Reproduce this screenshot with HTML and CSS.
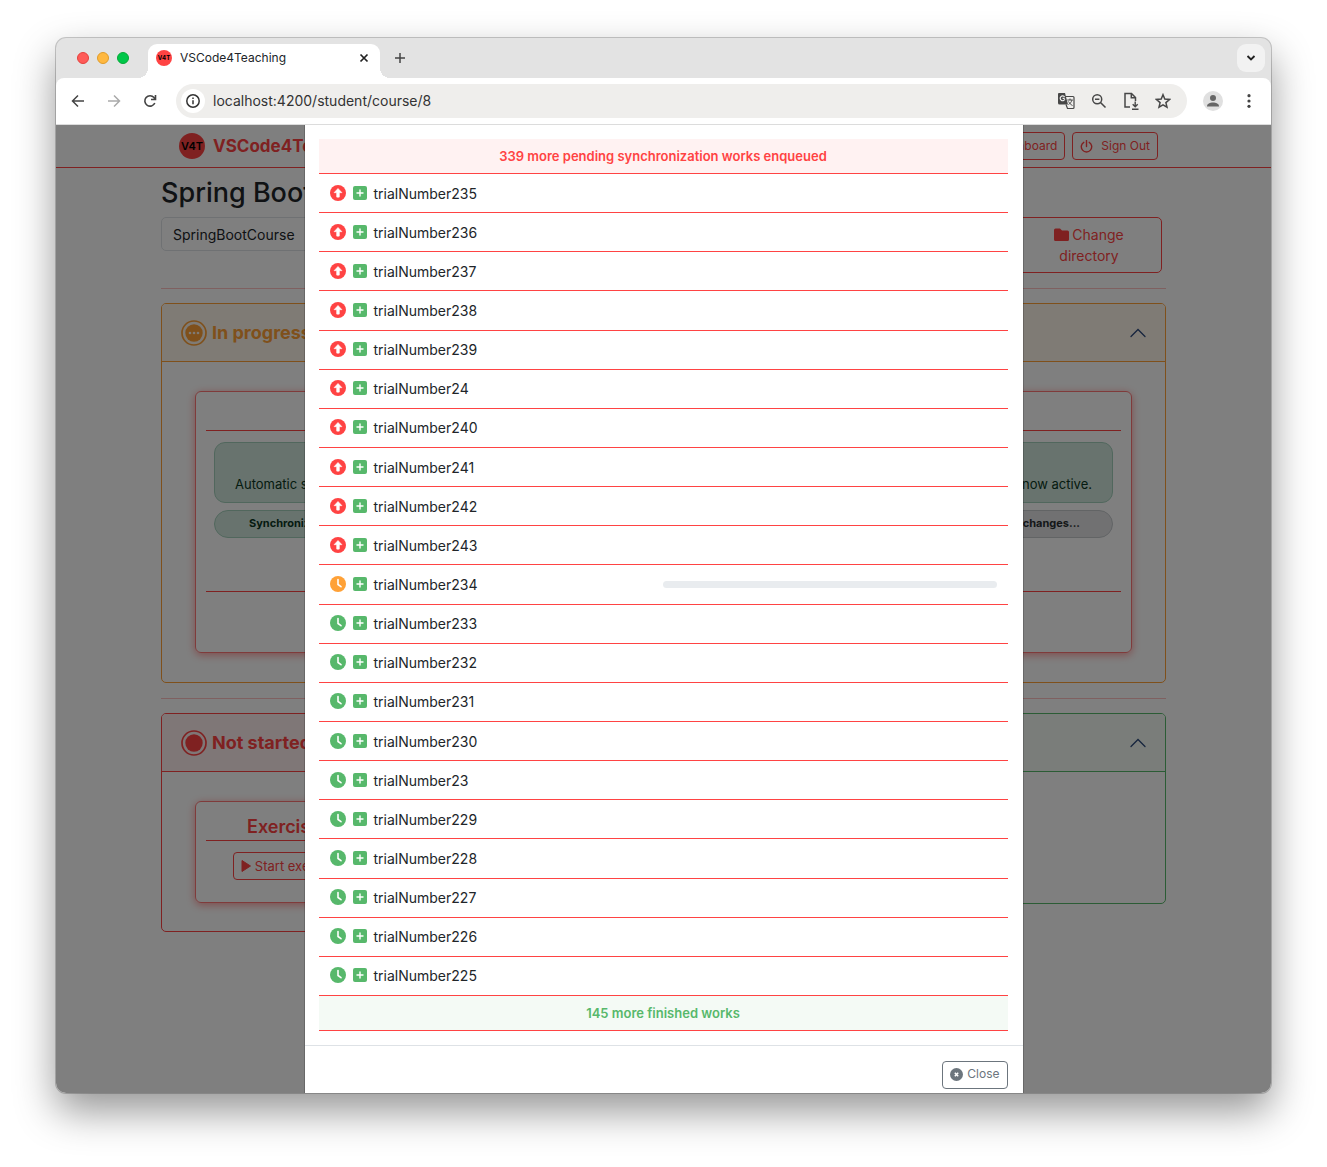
FILE: index.html
```html
<!DOCTYPE html>
<html lang="en">
<head>
<meta charset="utf-8">
<meta name="viewport" content="width=device-width, initial-scale=1">
<title>VSCode4Teaching</title>
<link rel="stylesheet" href="styles.css">
</head>
<body>
<svg class="sprite" aria-hidden="true">
  <symbol id="up" viewBox="0 0 16 16"><circle cx="8" cy="8" r="8" fill="currentColor"/><path d="M8 3.400l4 4.300H9.400v4a.5.5 0 0 1-.5.5H7.100a.5.5 0 0 1-.5-.5v-4H4z" fill="#fff" stroke="#fff" stroke-width=".5" stroke-linejoin="round"/></symbol>
  <symbol id="clock" viewBox="0 0 16 16"><circle cx="8" cy="8" r="8" fill="currentColor"/><path d="M8 3.500v5l3 2.200" fill="none" stroke="#fff" stroke-width="1.600" stroke-linecap="round"/></symbol>
  <symbol id="plus" viewBox="0 0 14 14"><rect width="14" height="14" rx="2" fill="currentColor"/><path d="M7 4v6M4 7h6" stroke="#fff" stroke-width="1.400" stroke-linecap="round"/></symbol>
  <symbol id="chevron" viewBox="0 0 16 16"><path d="M1 11.500l7-7 7 7" fill="none" stroke="currentColor" stroke-width="1.300" stroke-linecap="round"/></symbol>
</svg>
<div class="window">
  <div class="tabs">
    <div class="lights"><i class="light light-red"></i><i class="light light-amber"></i><i class="light light-green"></i></div>
    <div class="tab">
      <span class="badge badge-small">V4T</span>
      <span class="tab-title">VSCode4Teaching</span>
      <button class="icon-button" aria-label="Close tab"><svg width="10" height="10" viewBox="0 0 10 10"><path d="M1.500 1.500l7 7M8.500 1.500l-7 7" stroke="#222" stroke-width="1.700"/></svg></button>
    </div>
    <button class="icon-button new-tab" aria-label="New tab"><svg width="12" height="12" viewBox="0 0 12 12"><path d="M6 1v10M1 6h10" stroke="#444" stroke-width="1.500"/></svg></button>
    <button class="icon-button tab-search" aria-label="Search tabs"><svg width="10" height="8" viewBox="0 0 10 8"><path d="M1.500 2L5 5.500 8.500 2" fill="none" stroke="#222" stroke-width="1.900"/></svg></button>
  </div>
  <div class="toolbar">
    <button class="icon-button" aria-label="Back"><svg width="14" height="14" viewBox="0 0 14 14"><path d="M13 7H2M7 1.500L1.500 7 7 12.500" fill="none" stroke="#444" stroke-width="1.500"/></svg></button>
    <button class="icon-button" aria-label="Forward"><svg width="14" height="14" viewBox="0 0 14 14"><path d="M1 7h11M7 1.500L12.500 7 7 12.500" fill="none" stroke="#aaa" stroke-width="1.500"/></svg></button>
    <button class="icon-button" aria-label="Reload"><svg width="14" height="14" viewBox="0 0 14 14"><path d="M11.800 9A5.200 5.200 0 1 1 11 3.600L12.300 5M12.500 1v4.500H8" fill="none" stroke="#444" stroke-width="1.600"/></svg></button>
    <div class="address">
      <span class="site-info"><svg width="14" height="14" viewBox="0 0 14 14"><circle cx="7" cy="7" r="6.200" fill="none" stroke="#333" stroke-width="1.500"/><path d="M7 6.200v4M7 3.400v1.600" stroke="#333" stroke-width="1.500"/></svg></span>
      <input class="url" aria-label="Address" value="localhost:4200/student/course/8">
      <button class="icon-button" aria-label="Translate"><svg width="18" height="18" viewBox="0 0 18 18"><path d="M2 1h6l3 11.500H2.500a1.500 1.500 0 0 1-1.500-1.500V2a1 1 0 0 1 1-1z" fill="#474747"/><path d="M8.500 4.500h7.500a1 1 0 0 1 1 1V15.500a1 1 0 0 1-1 1h-5.500l-1.500-4" fill="none" stroke="#474747" stroke-width="1.200"/><path d="M7.700 6.400H5.600M7.600 5A2.400 2.400 0 1 0 7.800 7.300" fill="none" stroke="#eee" stroke-width="1.200"/><path d="M10.300 8h5.500M13 6.500V8M15 8c-.5 2-2 3.500-3.500 4.500M11.500 9.500c1 1.500 2 3 4 4" fill="none" stroke="#474747"/></svg></button>
      <button class="icon-button" aria-label="Zoom"><svg width="16" height="16" viewBox="0 0 16 16"><circle cx="6.200" cy="6.200" r="4.500" fill="none" stroke="#474747" stroke-width="1.500"/><path d="M9.500 9.500l5 5M4 6.200h4.400" stroke="#474747" stroke-width="1.500"/></svg></button>
      <button class="icon-button" aria-label="Install"><svg width="16" height="18" viewBox="0 0 16 18"><path d="M7 15H2V1.500h6.500L12.500 5.500V9M8.300 1.500v4.300h4.200" fill="none" stroke="#474747" stroke-width="1.500"/><path d="M12.200 9.500v5M9.700 12.300l2.500 2.500 2.500-2.500M9 17.200h6.500" fill="none" stroke="#474747" stroke-width="1.400"/></svg></button>
      <button class="icon-button" aria-label="Bookmark"><svg width="16" height="16" viewBox="0 0 16 16"><path d="M8 1.700l1.800 4.400 4.700.4-3.600 3.100 1.100 4.600L8 11.800l-4 2.400 1.100-4.600L1.500 6.500l4.700-.4z" fill="none" stroke="#474747" stroke-width="1.500"/></svg></button>
    </div>
    <button class="icon-button profile" aria-label="Profile"><svg width="20" height="20" viewBox="0 0 20 20"><circle cx="10" cy="10" r="10" fill="#e0e0e0"/><circle cx="10" cy="7" r="3" fill="#666"/><path d="M4 15.500c0-3 3-4 6-4s6 1 6 4z" fill="#666"/></svg></button>
    <button class="icon-button" aria-label="Menu"><svg width="4" height="14" viewBox="0 0 4 14"><g fill="#444"><circle cx="2" cy="1.700" r="1.600"/><circle cx="2" cy="7" r="1.600"/><circle cx="2" cy="12.300" r="1.600"/></g></svg></button>
  </div>

  <div class="viewport">
    <div class="page">
      <nav class="nav">
        <a class="brand" href="#"><span class="badge">V4T</span>VSCode4Teaching</a>
        <div class="nav-actions">
          <button class="button button-red">Dashboard</button>
          <button class="button button-red sign-out"><svg width="13" height="13" viewBox="0 0 13 13"><path d="M3.800 2.300a5.200 5.200 0 1 0 5.400 0M6.500.5v6" fill="none" stroke="currentColor" stroke-width="1.400" stroke-linecap="round"/></svg>Sign Out</button>
        </div>
      </nav>
      <main class="container">
        <h1 class="title">Spring Boot</h1>
        <div class="directory">
          <input class="directory-path" aria-label="Course directory" value="SpringBootCourse" readonly>
          <button class="button-directory"><svg class="folder" width="16" height="14" viewBox="0 0 16 14"><path d="M2 .5h4l2 2h5.500A1.500 1.500 0 0 1 15 4v7.500a1.500 1.500 0 0 1-1.500 1.500h-12A1.500 1.500 0 0 1 0 11.500v-9.500A1.500 1.500 0 0 1 1.500.5z" fill="currentColor"/></svg>Change directory</button>
        </div>
        <hr class="rule">
        <section class="panel panel-amber">
          <h2 class="panel-header"><svg width="26" height="26" viewBox="0 0 26 26"><circle cx="13" cy="13" r="12" fill="none" stroke="currentColor" stroke-width="1.700"/><circle cx="13" cy="13" r="8.700" fill="currentColor"/><g fill="#fff5e8"><circle cx="9" cy="13" r="1.300"/><circle cx="13" cy="13" r="1.300"/><circle cx="17" cy="13" r="1.300"/></g></svg><span>In progress</span><svg class="chevron"><use href="#chevron"/></svg></h2>
          <div class="panel-body">
            <article class="card card-wide">
              <div class="card-title"></div>
              <div class="notices">
                <p class="alert"><span>Automatic synchronization</span><span>is now active.</span></p>
                <div class="pills"><span class="pill pill-green">Synchronized</span><span class="pill pill-gray">Waiting for changes...</span></div>
              </div>
              <div class="card-foot"></div>
            </article>
          </div>
        </section>
        <hr class="rule">
        <div class="columns">
          <section class="panel panel-red">
            <h2 class="panel-header"><svg width="26" height="26" viewBox="0 0 26 26"><circle cx="13" cy="13" r="12" fill="none" stroke="currentColor" stroke-width="1.700"/><circle cx="13" cy="13" r="8.700" fill="currentColor"/></svg><span>Not started</span></h2>
            <div class="panel-body">
              <article class="card card-small">
                <h3 class="card-title">Exercise 1</h3>
                <button class="button button-red start"><svg width="10" height="12" viewBox="0 0 10 12"><path d="M1 .5L9.500 6 1 11.500z" fill="currentColor" stroke="currentColor" stroke-linejoin="round"/></svg>Start exercise</button>
              </article>
            </div>
          </section>
          <section class="panel panel-green">
            <h2 class="panel-header"><span></span><svg class="chevron"><use href="#chevron"/></svg></h2>
            <div class="panel-body panel-empty"></div>
          </section>
        </div>
      </main>
    </div>

    <div class="backdrop">
      <div class="modal" role="dialog" aria-label="Synchronization works">
        <ul class="works">
          <li class="summary summary-pending">339 more pending synchronization works enqueued</li>
          <li class="work pending"><svg class="state"><use href="#up"/></svg><svg class="kind"><use href="#plus"/></svg><span>trialNumber235</span></li>
          <li class="work pending"><svg class="state"><use href="#up"/></svg><svg class="kind"><use href="#plus"/></svg><span>trialNumber236</span></li>
          <li class="work pending"><svg class="state"><use href="#up"/></svg><svg class="kind"><use href="#plus"/></svg><span>trialNumber237</span></li>
          <li class="work pending"><svg class="state"><use href="#up"/></svg><svg class="kind"><use href="#plus"/></svg><span>trialNumber238</span></li>
          <li class="work pending"><svg class="state"><use href="#up"/></svg><svg class="kind"><use href="#plus"/></svg><span>trialNumber239</span></li>
          <li class="work pending"><svg class="state"><use href="#up"/></svg><svg class="kind"><use href="#plus"/></svg><span>trialNumber24</span></li>
          <li class="work pending"><svg class="state"><use href="#up"/></svg><svg class="kind"><use href="#plus"/></svg><span>trialNumber240</span></li>
          <li class="work pending"><svg class="state"><use href="#up"/></svg><svg class="kind"><use href="#plus"/></svg><span>trialNumber241</span></li>
          <li class="work pending"><svg class="state"><use href="#up"/></svg><svg class="kind"><use href="#plus"/></svg><span>trialNumber242</span></li>
          <li class="work pending"><svg class="state"><use href="#up"/></svg><svg class="kind"><use href="#plus"/></svg><span>trialNumber243</span></li>
          <li class="work running"><svg class="state"><use href="#clock"/></svg><svg class="kind"><use href="#plus"/></svg><span>trialNumber234</span><div class="progress" role="progressbar" aria-label="trialNumber234" aria-valuenow="0"></div></li>
          <li class="work done"><svg class="state"><use href="#clock"/></svg><svg class="kind"><use href="#plus"/></svg><span>trialNumber233</span></li>
          <li class="work done"><svg class="state"><use href="#clock"/></svg><svg class="kind"><use href="#plus"/></svg><span>trialNumber232</span></li>
          <li class="work done"><svg class="state"><use href="#clock"/></svg><svg class="kind"><use href="#plus"/></svg><span>trialNumber231</span></li>
          <li class="work done"><svg class="state"><use href="#clock"/></svg><svg class="kind"><use href="#plus"/></svg><span>trialNumber230</span></li>
          <li class="work done"><svg class="state"><use href="#clock"/></svg><svg class="kind"><use href="#plus"/></svg><span>trialNumber23</span></li>
          <li class="work done"><svg class="state"><use href="#clock"/></svg><svg class="kind"><use href="#plus"/></svg><span>trialNumber229</span></li>
          <li class="work done"><svg class="state"><use href="#clock"/></svg><svg class="kind"><use href="#plus"/></svg><span>trialNumber228</span></li>
          <li class="work done"><svg class="state"><use href="#clock"/></svg><svg class="kind"><use href="#plus"/></svg><span>trialNumber227</span></li>
          <li class="work done"><svg class="state"><use href="#clock"/></svg><svg class="kind"><use href="#plus"/></svg><span>trialNumber226</span></li>
          <li class="work done"><svg class="state"><use href="#clock"/></svg><svg class="kind"><use href="#plus"/></svg><span>trialNumber225</span></li>
          <li class="summary summary-done">145 more finished works</li>
        </ul>
        <footer class="modal-footer">
          <button class="button close"><svg width="13" height="13" viewBox="0 0 13 13"><circle cx="6.500" cy="6.500" r="6.500" fill="currentColor"/><path d="M4.800 4.800l3.400 3.400M8.200 4.800L4.800 8.200" stroke="#fff" stroke-width="1.500"/></svg>Close</button>
        </footer>
      </div>
    </div>
  </div>
</div>
</body>
</html>
```
FILE: styles.css
```css
:root {
  --red: #ff4343;
  --green: #57b86b;
  --amber: #ffa136;
}

* { box-sizing: border-box; }

body {
  margin: 0;
  padding: 38px 56px 74px;
  min-height: 100vh;
  display: flex;
  background: #fff;
  color: #212529;
  font: 14px/21px Inter, "Liberation Sans", sans-serif;
}

h1, h2, h3, p, ul { margin: 0; padding: 0; }
button, input { font: inherit; color: inherit; }
svg { display: block; flex: none; }
.sprite { position: absolute; width: 0; height: 0; }

/* Browser window */
.window {
  flex: 1;
  min-width: 0;
  display: flex;
  flex-direction: column;
  border-radius: 10px;
  overflow: hidden;
  background: #e3e3e3;
  box-shadow: 0 0 0 1px rgba(0, 0, 0, .2), 0 18px 40px rgba(0, 0, 0, .42);
}

.tabs {
  height: 40px;
  display: flex;
  align-items: center;
  padding: 0 6px 0 21px;
}

.lights { display: flex; gap: 8px; margin-right: 19px; }
.light { width: 12px; height: 12px; border-radius: 50%; }
.light-red { background: #ff5b58; border: 1px solid #e5413d; }
.light-amber { background: #ffb840; border: 1px solid #e09c2a; }
.light-green { background: #00c749; border: 1px solid #06a937; }

.tab {
  position: relative;
  align-self: flex-end;
  width: 232px;
  height: 34px;
  padding: 0 11px 6px 8px;
  display: flex;
  align-items: center;
  border-radius: 9px 9px 0 0;
  background: #fff;
}

.tab::before, .tab::after {
  content: "";
  position: absolute;
  bottom: 0;
  width: 10px;
  height: 10px;
}
.tab::before { right: 100%; background: radial-gradient(circle at 0 0, transparent 10px, #fff 10px); }
.tab::after { left: 100%; background: radial-gradient(circle at 100% 0, transparent 10px, #fff 10px); }

.tab-title { flex: 1; margin-left: 8px; font-size: 12px; line-height: 20px; }

.icon-button {
  display: grid;
  place-items: center;
  padding: 0;
  border: 0;
  background: none;
}
.new-tab { margin-left: 14px; }
.tab-search {
  width: 28px;
  height: 28px;
  margin-left: auto;
  border-radius: 9px;
  background: #f2f2f2;
}

.toolbar {
  height: 47px;
  display: flex;
  align-items: center;
  gap: 22px;
  padding: 0 20px 0 15px;
  border-bottom: 1px solid #dcdcdc;
  border-radius: 8px 8px 0 0;
  background: #fff;
}

.address {
  flex: 1;
  min-width: 0;
  height: 34px;
  margin-left: -3px;
  display: flex;
  align-items: center;
  gap: 16px;
  padding: 0 16px 0 5px;
  border-radius: 17px;
  background: #efeeec;
}
.address .icon-button { flex: none; }
.site-info {
  flex: none;
  width: 24px;
  height: 24px;
  display: grid;
  place-items: center;
  border-radius: 50%;
  background: #fff;
}
.url {
  flex: 1;
  min-width: 0;
  height: 20px;
  margin-left: -8px;
  padding: 0 0 2px;
  border: 0;
  background: none;
  color: #333;
}
.profile { margin: 0 2px 0 -6px; }

.badge {
  flex: none;
  width: 26px;
  height: 26px;
  display: grid;
  place-items: center;
  border-radius: 50%;
  background: var(--red);
  color: #000;
  font-size: 11px;
  font-weight: 600;
  line-height: 1;
}
.badge-small { width: 16px; height: 16px; font-size: 6px; font-weight: 700; }

/* The page and its modal share one grid cell */
.viewport { flex: 1; display: grid; overflow: hidden; }
.page, .backdrop { grid-area: 1 / 1; min-width: 0; }
.page { background: #fff; }

.nav {
  height: 43px;
  display: flex;
  align-items: center;
  justify-content: space-between;
  padding: 0 113px 0 123px;
  border-bottom: 1px solid var(--red);
}
.brand {
  display: flex;
  align-items: center;
  gap: 8px;
  color: var(--red);
  font-size: 17px;
  font-weight: 700;
  text-decoration: none;
}
.nav-actions { display: flex; gap: 7px; }

.button {
  height: 28px;
  display: flex;
  align-items: center;
  gap: 4px;
  padding: 0 7px;
  border: 1px solid currentColor;
  border-radius: 4px;
  background: none;
  font-size: 12px;
  line-height: 20px;
}
.button-red { color: var(--red); }
.sign-out { gap: 8px; }

.container { margin: 0 105px; }
.title {
  margin: 7px 0 6px;
  font-size: 27px;
  font-weight: 500;
  line-height: 36px;
}

.directory { display: flex; align-items: flex-start; padding-right: 4px; }
.directory-path {
  flex: 1;
  min-width: 0;
  height: 34px;
  padding: 0 11px;
  border: 1px solid #dee2e6;
  border-radius: 5px;
  background: none;
}
.button-directory {
  width: 146px;
  height: 56px;
  padding: 0 24px;
  border: 1px solid var(--red);
  border-radius: 5px;
  background: none;
  color: var(--red);
}
.folder { display: inline-block; margin-right: 2px; vertical-align: -2px; }

.rule {
  height: 1px;
  margin: 15px 0 14px;
  border: 0;
  background: #ffc0c0;
}

.panel { border: 1px solid var(--tone); border-radius: 5px; }
.panel-amber { --tone: var(--amber); --tint: #fff6eb; }
.panel-red { --tone: var(--red); --tint: #ffeeee; }
.panel-green { --tone: var(--green); --tint: #f4faf4; }
.panel-header {
  height: 58px;
  display: flex;
  align-items: center;
  gap: 5px;
  padding: 0 19px;
  border-bottom: 1px solid var(--tone);
  border-radius: 4px 4px 0 0;
  background: var(--tint);
  color: var(--tone);
  font-size: 18px;
  font-weight: 700;
}
.panel-body { padding: 29px 33px 28px; }
.panel-empty { min-height: 131px; }
.chevron { width: 16px; height: 16px; margin-left: auto; color: #2c4a7c; }

.card {
  padding: 0 10px;
  border: 1px solid #ff7777;
  border-radius: 6px;
  box-shadow: 0 2px 9px rgba(255, 67, 67, .55);
}
.card-wide { margin-bottom: 1px; }
.card-title {
  height: 39px;
  border-bottom: 1px solid var(--red);
  color: var(--red);
  font-size: 18px;
  font-weight: 600;
  line-height: 26px;
  text-align: center;
}
.notices { padding: 11px 8px 53px; border-bottom: 1px solid var(--red); }
.alert {
  height: 61px;
  display: flex;
  align-items: flex-end;
  justify-content: space-between;
  padding: 0 20px 7px;
  border: 1px solid #a3cfbb;
  border-radius: 11px;
  background: #d1e7dd;
  color: #0a3622;
  font-size: 13px;
}
.pills { display: flex; gap: 8px; margin-top: 7px; }
.pill {
  flex: 1;
  height: 28px;
  padding: 0 32px 0 34px;
  border: 1px solid;
  border-radius: 14px;
  font-size: 11px;
  font-weight: 700;
  line-height: 25px;
}
.pill-green { border-color: #a3cfbb; background: #d1e7dd; color: #0a3622; }
.pill-gray { border-color: #c4c8cb; background: #e2e3e5; color: #2b2f32; text-align: right; }
.card-foot { height: 60px; }

.columns { display: grid; grid-template-columns: 1fr 1fr; align-items: start; gap: 22px; }
.card-small { width: 190px; padding-top: 12px; padding-bottom: 22px; }
.card-small .card-title { height: 27px; margin-bottom: 11px; }
.start { margin: 0 auto; font-size: 13px; }

/* Modal */
.backdrop {
  display: flex;
  justify-content: center;
  z-index: 1;
  background: rgba(0, 0, 0, .5);
}
.modal {
  width: 720px;
  max-width: 100%;
  display: flex;
  flex-direction: column;
  border: solid rgba(0, 0, 0, .18);
  border-width: 0 1px;
  background: #fff;
  background-clip: padding-box;
}
.works {
  flex: 1;
  display: grid;
  grid-template-rows: 35px repeat(21, minmax(39px, 1fr)) 35px;
  padding: 14px 15px 14px 14px;
  list-style: none;
}
.summary, .work { border-bottom: 1px solid var(--red); }
.summary {
  font-size: 13px;
  font-weight: 600;
  line-height: 34px;
  text-align: center;
}
.summary-pending { background: #fff2f2; color: var(--red); }
.summary-done { background: #f4faf5; color: var(--green); }
.work {
  display: flex;
  align-items: center;
  padding: 0 11px;
}
.state { width: 16px; height: 16px; margin: 0 7px 1px 0; }
.kind { width: 14px; height: 14px; margin: 0 7px 1px 0; color: var(--green); }
.pending .state { color: var(--red); }
.running .state { color: var(--amber); }
.done .state { color: var(--green); }
.progress {
  width: 50%;
  height: 7px;
  margin-left: auto;
  border-radius: 4px;
  background: #e9ecef;
}

.modal-footer {
  display: flex;
  justify-content: flex-end;
  padding: 15px 15px 4px;
  border-top: 1px solid #dee2e6;
}
.close { padding-bottom: 2px; color: #6c757d; }
```
